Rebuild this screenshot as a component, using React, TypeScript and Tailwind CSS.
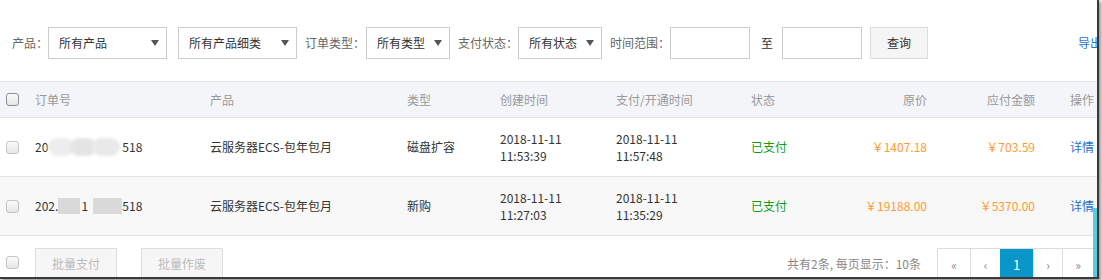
import React from 'react';

const font = "font-['Noto_Sans_CJK_SC','Noto_Sans',sans-serif]";

function Arrow() {
  return (
    <svg width="8" height="6" viewBox="0 0 8 6" className="shrink-0">
      <path d="M0 0 L8 0 L4 6 Z" fill="#555" />
    </svg>
  );
}

function Select({ text, width }: { text: string; width: string }) {
  return (
    <div className={`${width} shrink-0 h-[32px] border border-[#ccc] bg-white flex items-center justify-between pl-[10px] pr-[7px] text-[#333]`}>
      <span>{text}</span>
      <Arrow />
    </div>
  );
}

function Checkbox({ dark }: { dark?: boolean }) {
  return (
    <div
      className={`w-[13px] h-[13px] rounded-[3px] border bg-gradient-to-b from-[#fafafa] to-[#e6e6e6] ${
        dark ? 'border-[#8f8f8f]' : 'border-[#c4c4c4]'
      }`}
    />
  );
}

const cols = 'grid grid-cols-[35px_175px_197px_93px_116px_135px_96px_80px_108px_1fr] items-center';

interface Order {
  pre: string;
  blur: React.ReactNode;
  type: string;
  created: [string, string];
  paid: [string, string];
  price: string;
  pay: string;
}

const orders: Order[] = [
  {
    pre: '20',
    blur: (
      <span className="inline-flex items-center w-[74px] h-[18px] align-middle">
        <span className="w-[26px] h-[18px] rounded-full bg-[#ededed] blur-[1.5px]" />
        <span className="w-[26px] h-[18px] rounded-full bg-[#e4e4e4] blur-[1.5px] -ml-[4px]" />
        <span className="w-[28px] h-[18px] rounded-full bg-[#e9e9e9] blur-[1.5px] -ml-[4px]" />
      </span>
    ),
    type: '磁盘扩容',
    created: ['2018-11-11', '11:53:39'],
    paid: ['2018-11-11', '11:57:48'],
    price: '￥1407.18',
    pay: '￥703.59',
  },
  {
    pre: '202.',
    blur: (
      <span className="inline-flex items-center w-[64px] h-[16px] align-middle">
        <span className="w-[22px] h-[16px] bg-[#d9d9d9]" />
        <span className="w-[9px] text-[#333] text-center">1</span>
        <span className="w-[29px] h-[16px] bg-[#dadada] ml-[4px]" />
      </span>
    ),
    type: '新购',
    created: ['2018-11-11', '11:27:03'],
    paid: ['2018-11-11', '11:35:29'],
    price: '￥19188.00',
    pay: '￥5370.00',
  },
];

export default function App() {
  return (
    <div className={`relative w-[1102px] h-[280px] bg-[#ececec] ${font} text-[12px]`}>
      <div className="relative w-[1099px] h-[279px] border-r-2 border-b-2 border-[#3a3a3a] shadow-[2px_2px_3px_rgba(0,0,0,0.35)] bg-white overflow-hidden">
        {/* filters */}
        <div className="flex items-center pt-[27px] pl-[12px] h-[59px] text-[#666] whitespace-nowrap">
          <span className="shrink-0 w-[36px]">产品：</span>
          <Select text="所有产品" width="w-[119px]" />
          <div className="ml-[11px] shrink-0">
            <Select text="所有产品细类" width="w-[119px]" />
          </div>
          <span className="ml-[8px] shrink-0 w-[61px]">订单类型：</span>
          <Select text="所有类型" width="w-[84px]" />
          <span className="ml-[8px] shrink-0 w-[60px]">支付状态：</span>
          <Select text="所有状态" width="w-[84px]" />
          <span className="ml-[8px] shrink-0 w-[60px]">时间范围：</span>
          <div className="shrink-0 w-[80px] h-[32px] border border-[#ccc] bg-white" />
          <span className="ml-[11px] shrink-0 w-[12px] text-[#333]">至</span>
          <div className="ml-[9px] shrink-0 w-[80px] h-[32px] border border-[#ccc] bg-white" />
          <div className="ml-[8px] shrink-0 w-[58px] h-[32px] border border-[#ddd] bg-[#f5f5f5] flex items-center justify-center text-[#333]">
            查询
          </div>
          <span className="ml-[150px] shrink-0 text-[#2a76d8]">导出</span>
        </div>

        {/* table */}
        <div className="mt-[22px] border-t border-[#e3e3e3]">
          <div className={`${cols} h-[36px] bg-[#f4f5f9] border-b border-[#e3e3e3] text-[#999]`}>
            <div className="pl-[6px]"><Checkbox dark /></div>
            <div>订单号</div>
            <div>产品</div>
            <div>类型</div>
            <div>创建时间</div>
            <div>支付/开通时间</div>
            <div>状态</div>
            <div className="text-right">原价</div>
            <div className="text-right">应付金额</div>
            <div className="pl-[35px]">操作</div>
          </div>
          {orders.map((o, i) => (
            <div
              key={i}
              className={`${cols} h-[59px] border-b border-[#e3e3e3] text-[#333] ${i % 2 === 1 ? 'bg-[#f8f8f9]' : 'bg-white'}`}
            >
              <div className="pl-[6px]"><Checkbox /></div>
              <div className="whitespace-nowrap flex items-center">
                <span>{o.pre}</span>
                {o.blur}
                <span>518</span>
              </div>
              <div>云服务器ECS-包年包月</div>
              <div>{o.type}</div>
              <div className="leading-[17px]">
                <div>{o.created[0]}</div>
                <div>{o.created[1]}</div>
              </div>
              <div className="leading-[17px]">
                <div>{o.paid[0]}</div>
                <div>{o.paid[1]}</div>
              </div>
              <div className="text-[#129a12]">已支付</div>
              <div className="text-right text-[#ff9a33]">{o.price}</div>
              <div className="text-right text-[#ff9a33]">{o.pay}</div>
              <div className="pl-[35px] text-[#1f6fd0] whitespace-nowrap">详情</div>
            </div>
          ))}
        </div>

        {/* footer */}
        <div className="flex items-start pt-[12px] whitespace-nowrap">
          <div className="pl-[6px] pt-[8px]"><Checkbox /></div>
          <div className="ml-[16px] w-[82px] h-[32px] border border-[#ddd] bg-[#f6f6f6] text-[#bbb] flex items-center justify-center">
            批量支付
          </div>
          <div className="ml-[24px] w-[82px] h-[32px] border border-[#ddd] bg-[#f6f6f6] text-[#bbb] flex items-center justify-center">
            批量作废
          </div>
          <div className="flex-1 flex justify-end items-start">
            <span className="pt-[7px] text-[#888] mr-[16px]">共有2条, 每页显示：10条</span>
            <div className="flex h-[34px] border border-[#ddd] text-[#888] mr-[3px]">
              <div className="w-[32px] flex items-center justify-center">«</div>
              <div className="w-[30px] flex items-center justify-center border-l border-[#ddd]">‹</div>
              <div className="w-[33px] flex items-center justify-center bg-[#0a96c8] text-white text-[13px]">1</div>
              <div className="w-[29px] flex items-center justify-center border-l border-[#ddd]">›</div>
              <div className="w-[31px] flex items-center justify-center border-l border-[#ddd]">»</div>
            </div>
          </div>
        </div>

        {/* floating side tab */}
        <div className="absolute right-0 top-[208px] w-[4px] h-[80px] bg-[#5ccbe0]" />
      </div>
    </div>
  );
}
